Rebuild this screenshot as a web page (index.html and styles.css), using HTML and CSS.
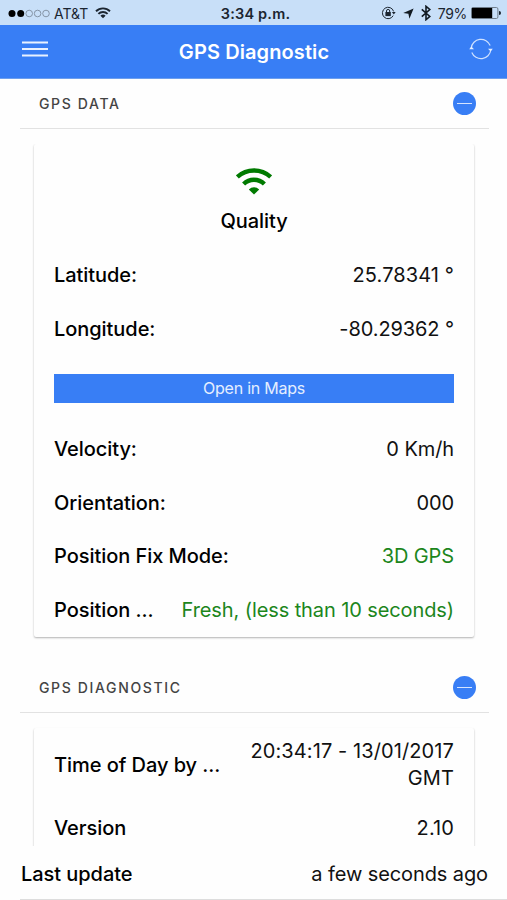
FILE: index.html
```html
<!DOCTYPE html>
<html lang="en">
<head>
    <meta charset="UTF-8">
    <meta name="viewport" content="width=device-width, initial-scale=1.0">
    <title>GPS Diagnostic</title>
    <link rel="stylesheet" href="styles.css">
</head>
<body>
    <!-- Status bar -->
    <div class="status-bar">
        <div class="status-left">
            <svg class="signal" width="42" height="9" viewBox="0 0 42 9">
                <circle cx="4" cy="4.5" r="3.5"/>
                <circle cx="12.7" cy="4.5" r="3.5"/>
                <g fill="none" stroke="#7e8c9d" stroke-width="0.9">
                    <circle cx="21.2" cy="4.5" r="3.3"/>
                    <circle cx="29.6" cy="4.5" r="3.3"/>
                    <circle cx="38" cy="4.5" r="3.3"/>
                </g>
            </svg>
            <span class="carrier">AT&amp;T</span>
            <svg class="status-wifi" width="16" height="12" viewBox="0 0 16 12">
                <path d="M1 4.2a10 10 0 0 1 14 0M3.4 6.9a6.5 6.5 0 0 1 9.2 0" fill="none" stroke="#1b2530" stroke-width="1.9"/>
                <path d="M8 11.3L5.4 8.8a3.8 3.8 0 0 1 5.2 0z" fill="#1b2530"/>
            </svg>
        </div>
        <span class="status-time">3:34 p.m.</span>
        <div class="status-right">
            <svg width="15" height="14" viewBox="0 0 15 14">
                <path d="M12.2 9.6A5.7 5.7 0 1 1 12.6 5.4" fill="none" stroke="#1b2530" stroke-width="1"/>
                <path d="M10.9 6h3.8l-1.9 2.6z" fill="#1b2530"/>
                <rect x="4.4" y="6" width="5.4" height="4.1" fill="#1b2530"/>
                <path d="M5.5 6.3V5a1.6 1.6 0 0 1 3.2 0v1.3" fill="none" stroke="#1b2530" stroke-width="1"/>
            </svg>
            <svg class="arrow" width="11" height="11" viewBox="0 0 11 11">
                <path d="M10.6.4L6.4 10.8 5.4 5.8.2 4.9z" fill="#111a22"/>
            </svg>
            <svg class="bluetooth" width="10" height="16" viewBox="0 0 10 16">
                <path d="M.8 4.3l8 7.2L5 14.7V1.3l3.8 3.2-8 7.2" fill="none" stroke="#111a22" stroke-width="1.6"/>
            </svg>
            <span class="percent">79%</span>
            <svg width="30" height="12" viewBox="0 0 30 12">
                <rect x=".5" y=".5" width="26.4" height="11" rx="1.5" fill="none" stroke="#6f7d8b"/>
                <rect x="1" y="1" width="20.2" height="10" fill="#000"/>
                <path d="M28 4a2 2 0 0 1 0 4z" fill="#1b2530"/>
            </svg>
        </div>
    </div>

    <!-- Navigation bar -->
    <header class="navbar">
        <svg class="menu" width="26" height="18" viewBox="0 0 26 18">
            <path d="M0 2.4h26M0 9h26M0 15.6h26" stroke="#e9f1ff" stroke-width="2"/>
        </svg>
        <h1>GPS Diagnostic</h1>
        <svg class="refresh" width="24" height="22" viewBox="0 0 24 22">
            <path d="M2.2 10A9.9 9.9 0 0 1 21.2 7.5M21.8 12A9.9 9.9 0 0 1 2.8 14.5" fill="none" stroke="#cfe1ff" stroke-width="1.2"/>
            <path d="M.2 11.2L2.4 8.6l2.6 2.6zM19 10.8h4.8l-2.2 2.8z" fill="#e4eeff"/>
        </svg>
    </header>

    <main class="content">
        <section>
            <div class="section-header">
                <h2>GPS DATA</h2>
                <span class="toggle"></span>
            </div>
            <div class="card">
                <div class="quality">
                    <svg width="36" height="27" viewBox="0 0 36 27">
                        <path d="M1.3 9A24.5 24.5 0 0 1 34.7 9M7.6 16A15 15 0 0 1 28.4 16" fill="none" stroke="#007a00" stroke-width="4.4"/>
                        <path d="M18 26.5l-5.2-5.1a7.6 7.6 0 0 1 10.4 0z" fill="#007a00"/>
                    </svg>
                    <span class="label">Quality</span>
                </div>
                <div class="row"><span class="label">Latitude:</span><span class="value number">25.78341 °</span></div>
                <div class="row"><span class="label">Longitude:</span><span class="value">-80.29362 °</span></div>
                <button class="maps-btn">Open in Maps</button>
                <div class="row"><span class="label">Velocity:</span><span class="value">0 Km/h</span></div>
                <div class="row"><span class="label">Orientation:</span><span class="value">000</span></div>
                <div class="row"><span class="label">Position Fix Mode:</span><span class="value good">3D GPS</span></div>
                <div class="row"><span class="label">Position ...</span><span class="value good">Fresh, (less than 10 seconds)</span></div>
            </div>
        </section>

        <section class="diagnostic">
            <div class="section-header">
                <h2>GPS DIAGNOSTIC</h2>
                <span class="toggle"></span>
            </div>
            <div class="card">
                <div class="row tall"><span class="label">Time of Day by ...</span><span class="value number">20:34:17 - 13/01/2017<br>GMT</span></div>
                <div class="row"><span class="label">Version</span><span class="value number">2.10</span></div>
            </div>
        </section>
    </main>

    <footer class="footer">
        <span class="label">Last update</span>
        <span class="value">a few seconds ago</span>
    </footer>
</body>
</html>
```
FILE: styles.css
```css
* {
    margin: 0;
    padding: 0;
    box-sizing: border-box;
}

body {
    display: flex;
    flex-direction: column;
    height: 100vh;
    overflow: hidden;
    background-color: #fefefe;
    color: #111;
    font-family: Inter, Roboto, sans-serif;
    font-size: 20px;
}

svg {
    display: block;
    flex: none;
}

/* Status bar */
.status-bar {
    display: grid;
    grid-template-columns: 1fr auto 1fr;
    align-items: center;
    flex: none;
    height: 25px;
    padding: 1px 6px 0 8px;
    background-color: #c8dff8;
    color: #1b2530;
    font-size: 14px;
}

.status-left,
.status-right {
    display: flex;
    align-items: center;
}

.status-right {
    justify-content: flex-end;
}

.carrier {
    margin: 0 7px 0 4px;
}

.status-time {
    padding-left: 2px;
    font-weight: 600;
    font-size: 14.5px;
    letter-spacing: 0.2px;
}

.arrow {
    margin-left: 7px;
}

.bluetooth {
    margin: 0 7px;
}

.percent {
    margin-right: 4px;
    letter-spacing: -0.3px;
}

/* Navigation bar */
.navbar {
    display: grid;
    grid-template-columns: 1fr auto 1fr;
    align-items: center;
    flex: none;
    height: 54px;
    padding: 0 14px 0 22px;
    background-color: #387ef5;
    border-bottom: 1px solid #6d9fee;
    color: #fff;
}

.navbar h1 {
    margin-left: -7px;
    font-size: 20px;
    font-weight: 600;
    letter-spacing: 0.1px;
}

.menu,
.refresh {
    margin-bottom: 6px;
}

.refresh {
    justify-self: end;
}

/* Sections */
.content {
    flex: 1;
    min-height: 0;
    overflow: hidden;
}

.section-header {
    display: flex;
    align-items: center;
    justify-content: space-between;
    height: 50px;
    margin: 0 18px 0 20px;
    padding: 0 13px 0 19px;
    border-bottom: 1px solid #e2e2e2;
}

.section-header h2 {
    color: #444;
    font-size: 14px;
    font-weight: 500;
    letter-spacing: 1.65px;
}

.toggle {
    display: flex;
    align-items: center;
    justify-content: center;
    width: 23px;
    height: 23px;
    border-radius: 50%;
    background-color: #387ef5;
}

.toggle::before {
    content: "";
    width: 15px;
    height: 1px;
    background-color: #d5e4ff;
}

.diagnostic {
    margin-top: 26px;
}

/* Cards */
.card {
    margin: 15px 33px 0 34px;
    padding: 0 20px;
    border-radius: 2px;
    box-shadow: 0 1px 2px rgba(0, 0, 0, 0.3);
    clip-path: inset(0 -3px -4px -3px);
}

.quality {
    display: flex;
    flex-direction: column;
    align-items: center;
    height: 104px;
    padding-top: 24px;
}

.quality .label {
    margin-top: 14px;
}

.row {
    display: flex;
    align-items: center;
    justify-content: space-between;
    height: 53.75px;
    padding-top: 2px;
    line-height: 27px;
}

.row.tall {
    height: 73px;
}

.label {
    color: #000;
    font-weight: 500;
    letter-spacing: -0.05px;
    white-space: nowrap;
}

.value {
    letter-spacing: -0.1px;
    text-align: right;
    white-space: nowrap;
}

.number {
    letter-spacing: 0.1px;
}

.good {
    color: #1c861c;
}

.maps-btn {
    display: block;
    width: 100%;
    height: 29px;
    margin: 18px 0 19px;
    border: none;
    background-color: #387ef5;
    color: #e4eeff;
    font-family: inherit;
    font-size: 16px;
    letter-spacing: -0.25px;
}

/* Last update bar */
.footer {
    display: flex;
    align-items: center;
    justify-content: space-between;
    flex: none;
    height: 54px;
    margin-left: 20px;
    padding: 2px 19px 0 1px;
    border-bottom: 1px solid #ddd;
}
```
